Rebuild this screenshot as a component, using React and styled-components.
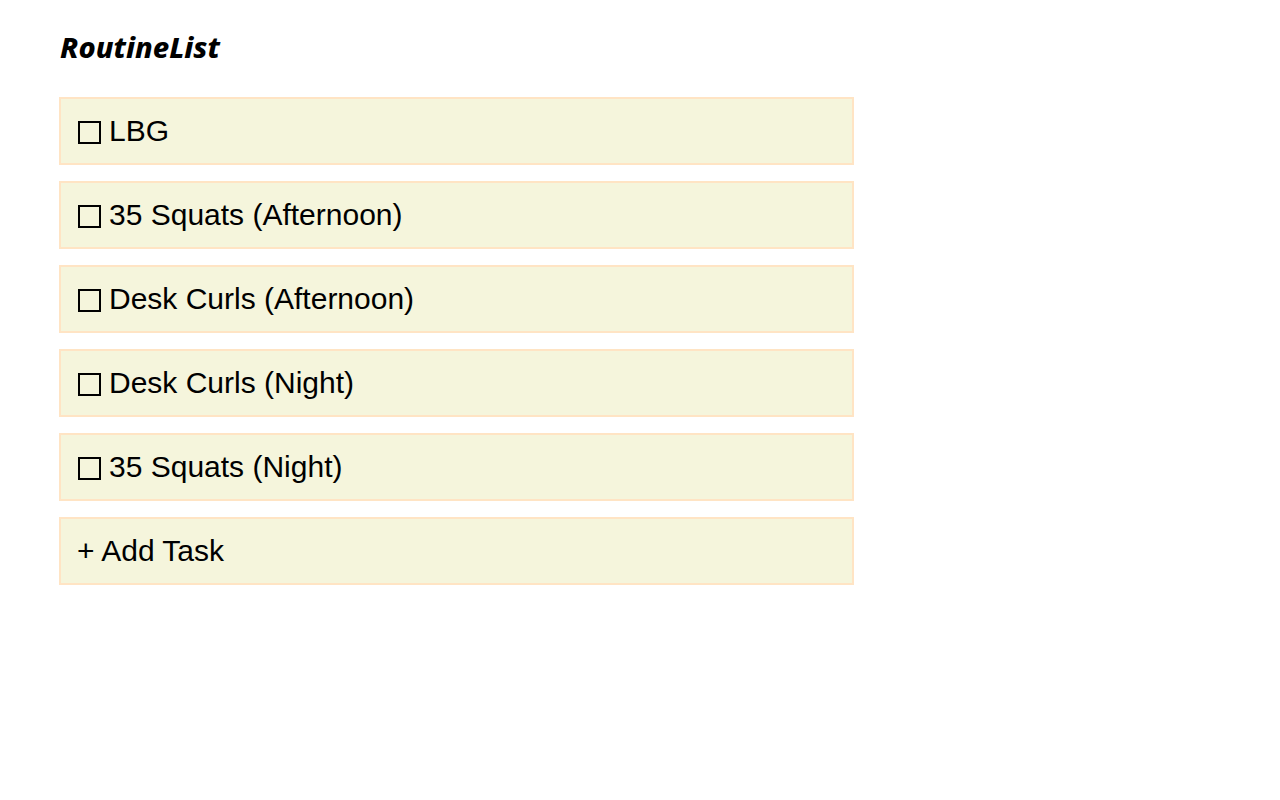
import React from 'react';
import styled, { createGlobalStyle } from 'styled-components';

const tasks = [
  'LBG',
  '35 Squats (Afternoon)',
  'Desk Curls (Afternoon)',
  'Desk Curls (Night)',
  '35 Squats (Night)',
];

const GlobalStyle = createGlobalStyle`
  body {
    margin: 0;
    background: #ffffff;
    font-family: "Liberation Sans", Arial, sans-serif;
  }
`;

const Page = styled.div`
  padding: 27px 59px;
  width: 795px;
`;

const Title = styled.h1`
  margin: 0 0 30px 1px;
  font-family: "Noto Sans", sans-serif;
  font-size: 29px;
  font-weight: 800;
  font-style: italic;
  line-height: 40px;
  color: #000;
`;

const List = styled.div`
  display: flex;
  flex-direction: column;
  gap: 16px;
`;

const Card = styled.div`
  display: flex;
  align-items: center;
  gap: 8px;
  box-sizing: border-box;
  height: 68px;
  padding: 0 16px;
  background: #f5f5dc;
  border: 2px solid #ffe4c4;
  font-size: 30px;
  color: #000;
`;

const Box = styled.span`
  box-sizing: border-box;
  width: 23px;
  height: 23px;
  margin: 3px 0 0 1px;
  border: 2.5px solid #000;
  flex-shrink: 0;
`;

export default function App() {
  return (
    <Page>
      <GlobalStyle />
      <Title>RoutineList</Title>
      <List>
        {tasks.map((t) => (
          <Card key={t}>
            <Box />
            <span>{t}</span>
          </Card>
        ))}
        <Card>+ Add Task</Card>
      </List>
    </Page>
  );
}
